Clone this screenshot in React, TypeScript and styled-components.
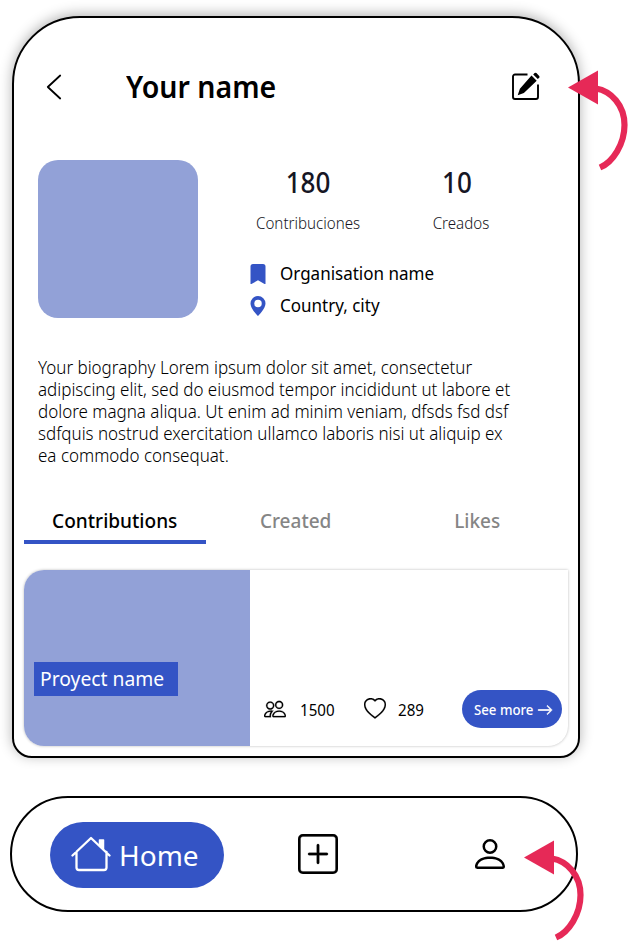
import React from "react";
import styled, { createGlobalStyle } from "styled-components";
import {
  BsArrowRight,
  BsBookmarkFill,
  BsGeoAltFill,
  BsHeart,
  BsPeople,
  BsPerson,
  BsPlusSquare,
} from "react-icons/bs";

const blue = "#3454c5";
const periwinkle = "#92a1d7";
const pink = "#e62957";

const GlobalStyle = createGlobalStyle`
  * { box-sizing: border-box; }
  body { margin: 0; background: #fff; color: #000; font-family: "Noto Sans", sans-serif; }
  svg { display: block; flex: none; }
`;

const Page = styled.main`
  position: relative;
  width: 628px;
  height: 941px;
  overflow: hidden;
  padding: 16px 0 0 10px;
`;

const Phone = styled.section`
  width: 568px;
  height: 742px;
  margin-left: 2px;
  border: 2px solid #000;
  border-radius: 68px 68px 20px 20px;
  box-shadow: 0 -2px 13px rgba(0, 0, 0, 0.3);
  background: #fff;
  padding: 0 10px;
`;

/* Semi-condensed lettering: narrows a run of text horizontally. */
const Condensed = styled.span<{ $ratio?: number; $from?: string }>`
  display: inline-block;
  transform: scaleX(${(p) => p.$ratio ?? 0.945});
  transform-origin: ${(p) => p.$from ?? "left"} center;
`;

const Header = styled.header`
  display: flex;
  align-items: center;
  height: 138px;
  padding: 0 27px 0 22px;
`;

const Title = styled.h1`
  margin: 0 auto 0 64px;
  font-size: 30px;
  line-height: 40px;
  font-weight: 600;
  white-space: nowrap;
`;

const Profile = styled.div`
  display: flex;
  height: 162px;
  padding: 4px 0 0 14px;
`;

const Avatar = styled.div`
  width: 160px;
  height: 158px;
  border-radius: 20px;
  background: ${periwinkle};
`;

const Details = styled.div`
  margin-left: 52px;
`;

const Stats = styled.div`
  display: grid;
  grid-template-columns: 117px 187px;
  height: 97px;
`;

const Stat = styled.div`
  text-align: center;
  color: #161624;
`;

const StatValue = styled.div`
  font-size: 28px;
  line-height: 44px;
  font-weight: 500;
`;

const CreatedValue = styled(StatValue)`
  padding-right: 6px;
`;

const StatLabel = styled.div`
  margin-top: 8px;
  font-size: 16px;
  line-height: 22px;
  font-weight: 300;
`;

const Fact = styled.div`
  display: flex;
  align-items: center;
  gap: 12px;
  height: 32px;
  margin-left: -2px;
  font-size: 18px;
  white-space: nowrap;

  svg {
    margin-top: 2px;
  }
`;

const Bio = styled.p`
  margin: 38px 0 0 14px;
  font-size: 18px;
  line-height: 22px;
  font-weight: 300;
  white-space: pre;
`;

const Tabs = styled.nav`
  display: grid;
  grid-template-columns: 182px 180px 182px;
  height: 46px;
  margin-top: 32px;
`;

const Tab = styled.div<{ $active?: boolean }>`
  height: 46px;
  text-align: center;
  font-size: 20px;
  line-height: 46px;
  font-weight: 500;
  color: ${(p) => (p.$active ? "#000" : "#858585")};
  border-bottom: 4px solid ${(p) => (p.$active ? blue : "transparent")};
`;

const Card = styled.article`
  display: flex;
  height: 176px;
  margin-top: 26px;
  border-radius: 20px 0 20px 20px;
  overflow: hidden;
  box-shadow: 0 0 3px rgba(0, 0, 0, 0.28);
`;

const Cover = styled.div`
  width: 226px;
  padding: 92px 0 0 10px;
  background: ${periwinkle};
`;

const CoverLabel = styled.div`
  width: 144px;
  height: 34px;
  padding-left: 6px;
  background: ${blue};
  color: #fff;
  font-size: 20px;
  line-height: 34px;
  white-space: nowrap;
`;

const CardInfo = styled.div`
  display: flex;
  align-items: center;
  flex: 1;
  height: 38px;
  margin-top: 120px;
  padding: 0 6px 0 14px;
`;

const Count = styled.span`
  width: 64px;
  margin: 2px 0 0 14px;
  font-size: 16px;
`;

const HeartCount = styled(Count)`
  width: auto;
  margin-left: 12px;
`;

const SeeMore = styled.button`
  display: flex;
  align-items: center;
  width: 100px;
  height: 38px;
  margin: 0 0 0 auto;
  padding: 0 0 0 12px;
  border: 0;
  border-radius: 19px;
  background: ${blue};
  color: #fff;
  font: 500 14px "Noto Sans", sans-serif;
  white-space: nowrap;

  svg {
    margin-top: 2px;
  }
`;

const BottomBar = styled.nav`
  display: flex;
  align-items: center;
  width: 568px;
  height: 116px;
  margin-top: 38px;
  padding: 0 66px 0 38px;
  border: 2px solid #000;
  border-radius: 58px;
`;

const Home = styled.div`
  display: flex;
  align-items: center;
  gap: 8px;
  width: 174px;
  height: 66px;
  margin: 2px 74px 0 0;
  padding-left: 21px;
  border-radius: 33px;
  background: ${blue};
  color: #fff;
  font-size: 28px;
  font-weight: 450;
`;

const ProfileLink = styled.div`
  margin-left: auto;
`;

const Pointer = styled.svg<{ $x: number; $y: number }>`
  position: absolute;
  left: ${(p) => p.$x}px;
  top: ${(p) => p.$y}px;
`;

const Callout = ({ x, y }: { x: number; y: number }) => (
  <Pointer $x={x} $y={y} width="60" height="101" viewBox="0 0 60 101" fill="none">
    <path d="M0 17.5 30 .5v34z" fill={pink} />
    <path d="M28 18.5C43 21 56.5 35 56.5 55c0 19-11.500 37-24.500 42.500" stroke={pink} strokeWidth="6.200" />
  </Pointer>
);

const BackIcon = () => (
  <svg width="16" height="26" viewBox="0 0 16 26" fill="none">
    <path d="M14.200 1.500 1.800 13l12.400 11.500" stroke="#000" strokeWidth="1.800" strokeLinecap="round" strokeLinejoin="round" />
  </svg>
);

const EditIcon = () => (
  <svg width="30" height="30" viewBox="0 0 30 30" fill="none">
    <path d="M16.500 2.500H4a2 2 0 0 0-2 2V25a2 2 0 0 0 2 2h21a2 2 0 0 0 2-2V12.500" stroke="#000" strokeWidth="1.900" />
    <path d="m20.500 3.500 5.200 5.200L12.900 20.900l-6.200 2.400 2.200-6.600zM22.200 2.500 23.600 1.100q.9-.8 1.800 0l2.800 2.800q.8.9 0 1.800l-1.400 1.400z" fill="#000" />
  </svg>
);

const HouseIcon = () => (
  <svg width="40" height="38" viewBox="0 0 40 38" fill="none" stroke="#fff" strokeWidth="2.300" strokeLinecap="round" strokeLinejoin="round">
    <path d="M1.500 19.500 20 2l18.500 17.500M5.500 16v15.500a2.500 2.500 0 0 0 2.500 2.500h25a2.500 2.500 0 0 0 2.500-2.500V16" />
    <path d="M28.500 4h4v9l-4-4z" fill="#fff" strokeWidth="1.500" />
  </svg>
);

export default function App() {
  return (
    <Page>
      <GlobalStyle />
      <Phone>
        <Header>
          <BackIcon />
          <Title>
            <Condensed $ratio={0.95}>Your name</Condensed>
          </Title>
          <EditIcon />
        </Header>
        <Profile>
          <Avatar />
          <Details>
            <Stats>
              <Stat>
                <StatValue>
                  <Condensed $ratio={0.93} $from="center">180</Condensed>
                </StatValue>
                <StatLabel>
                  <Condensed $from="center">Contribuciones</Condensed>
                </StatLabel>
              </Stat>
              <Stat>
                <CreatedValue>
                  <Condensed $ratio={0.93} $from="center">10</Condensed>
                </CreatedValue>
                <StatLabel>
                  <Condensed $from="center">Creados</Condensed>
                </StatLabel>
              </Stat>
            </Stats>
            <Fact>
              <BsBookmarkFill size={20} color={blue} />
              <Condensed>Organisation name</Condensed>
            </Fact>
            <Fact>
              <BsGeoAltFill size={20} color={blue} />
              <Condensed>Country, city</Condensed>
            </Fact>
          </Details>
        </Profile>
        <Bio>
          <Condensed $ratio={0.943}>
            {`Your biography Lorem ipsum dolor sit amet, consectetur
adipiscing elit, sed do eiusmod tempor incididunt ut labore et
dolore magna aliqua. Ut enim ad minim veniam, dfsds fsd dsf
sdfquis nostrud exercitation ullamco laboris nisi ut aliquip ex
ea commodo consequat.`}
          </Condensed>
        </Bio>
        <Tabs>
          <Tab $active>
            <Condensed $ratio={0.953} $from="center">Contributions</Condensed>
          </Tab>
          <Tab>
            <Condensed $ratio={0.95} $from="center">Created</Condensed>
          </Tab>
          <Tab>
            <Condensed $ratio={0.95} $from="center">Likes</Condensed>
          </Tab>
        </Tabs>
        <Card>
          <Cover>
            <CoverLabel>
              <Condensed $ratio={0.965}>Proyect name</Condensed>
            </CoverLabel>
          </Cover>
          <CardInfo>
            <BsPeople size={22} stroke="#000" strokeWidth={0.15} />
            <Count>
              <Condensed>1500</Condensed>
            </Count>
            <BsHeart size={22} stroke="#000" strokeWidth={0.15} />
            <HeartCount>
              <Condensed>289</Condensed>
            </HeartCount>
            <SeeMore>
              <Condensed>See more</Condensed>
              <BsArrowRight size={16} stroke="#fff" strokeWidth={0.7} />
            </SeeMore>
          </CardInfo>
        </Card>
      </Phone>
      <BottomBar>
        <Home>
          <HouseIcon />
          <Condensed $ratio={1}>Home</Condensed>
        </Home>
        <BsPlusSquare size={40} stroke="#000" strokeWidth={0.1} />
        <ProfileLink>
          <BsPerson size={40} />
        </ProfileLink>
      </BottomBar>
      <Callout x={568} y={70} />
      <Callout x={524} y={840} />
    </Page>
  );
}
